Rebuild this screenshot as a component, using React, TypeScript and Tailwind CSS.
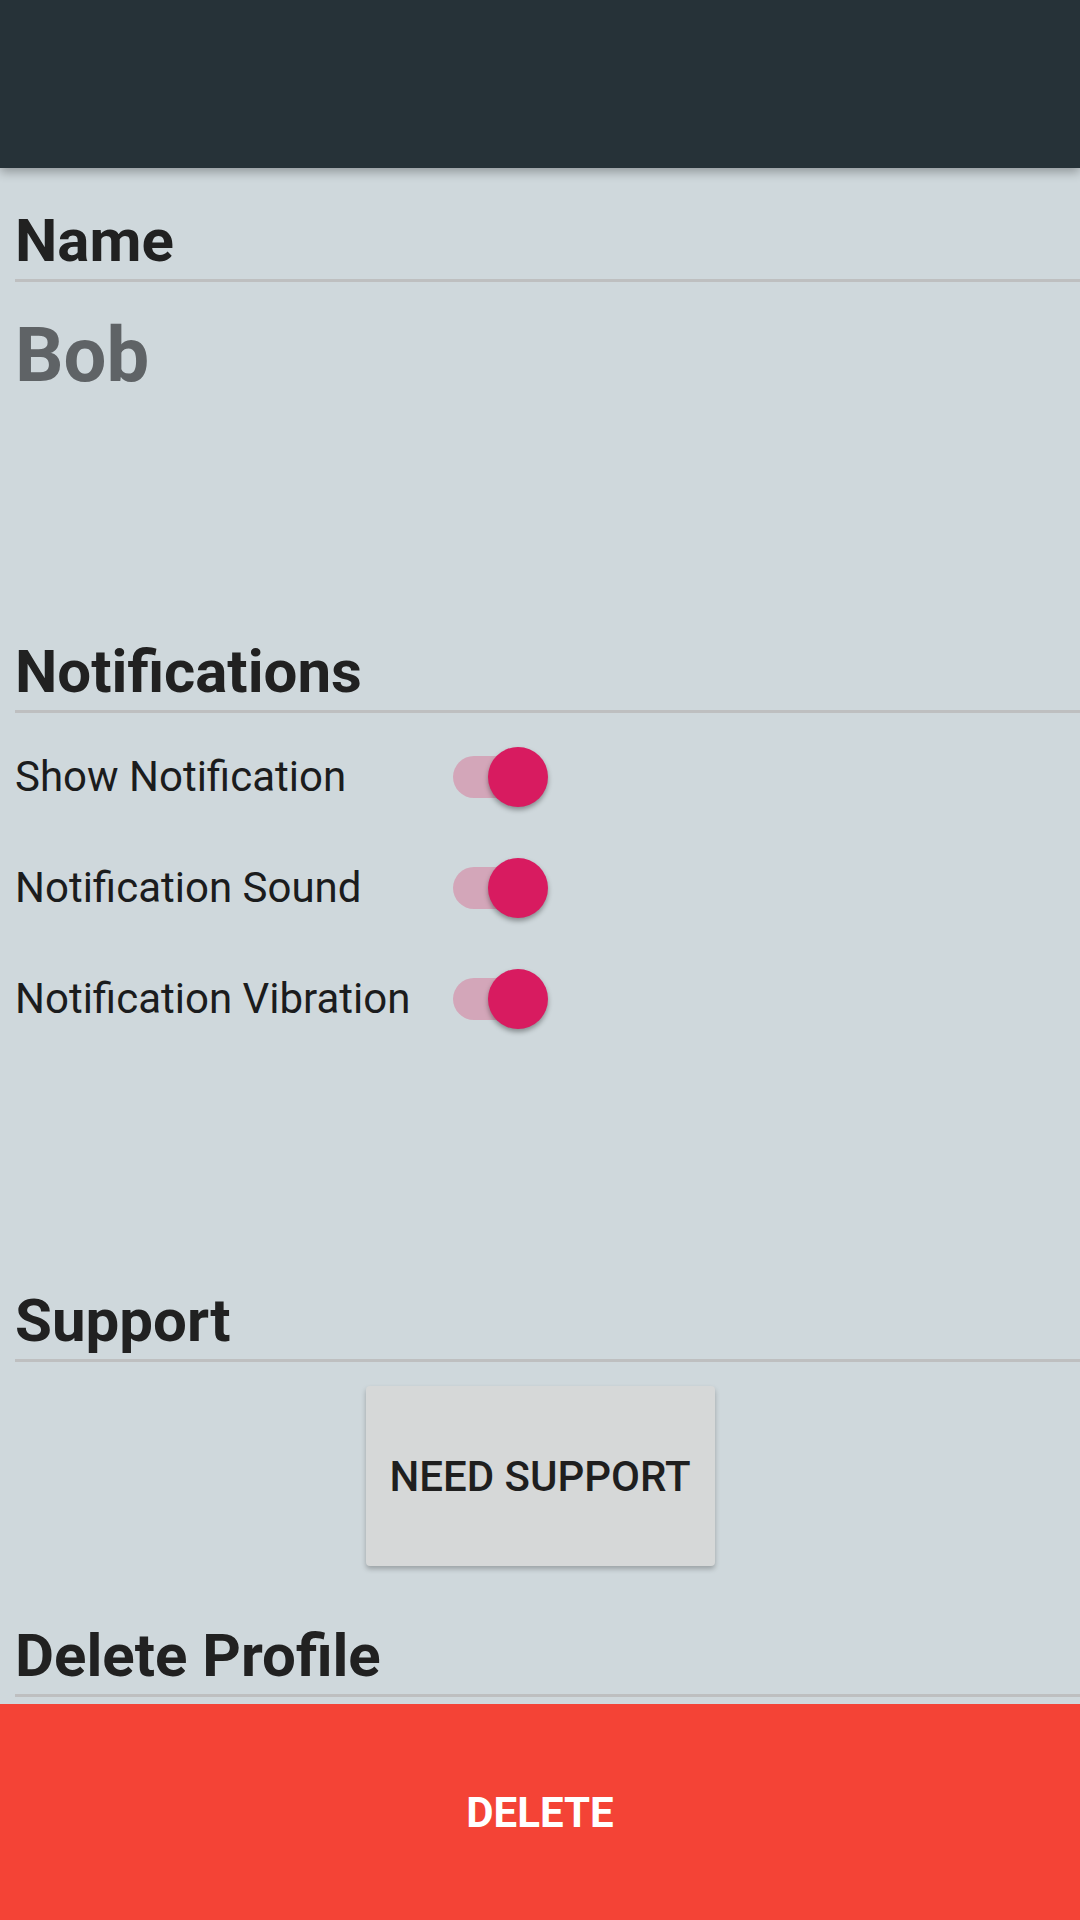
import React, { useState } from 'react';

function SectionTitle({ title, className = '' }: { title: string; className?: string }) {
  return (
    <div className={className}>
      <h2 className="pl-[15px] text-[60px] leading-[60px] font-bold text-[#212121]">{title}</h2>
      <div className="ml-[15px] mt-[8px] h-[3px] bg-[#bebfc0]" />
    </div>
  );
}

function Toggle({ on, onChange }: { on: boolean; onChange: () => void }) {
  return (
    <button onClick={onChange} className="relative w-[95px] h-[60px] shrink-0">
      <span
        className={
          on
            ? 'absolute left-0 top-[9px] w-[85px] h-[42px] rounded-full bg-[#d3a6b9]'
            : 'absolute left-0 top-[9px] w-[85px] h-[42px] rounded-full bg-[#b0b7ba]'
        }
      />
      <span
        className={
          on
            ? 'absolute right-0 top-0 w-[60px] h-[60px] rounded-full bg-[#d81b60] shadow-[0_3px_5px_rgba(0,0,0,0.35)]'
            : 'absolute left-0 top-0 w-[60px] h-[60px] rounded-full bg-[#f1f1f1] shadow-[0_3px_5px_rgba(0,0,0,0.35)]'
        }
      />
    </button>
  );
}

export default function App() {
  const [settings, setSettings] = useState({
    show: true,
    sound: true,
    vibration: true,
  });

  const rows: { key: 'show' | 'sound' | 'vibration'; label: string }[] = [
    { key: 'show', label: 'Show Notification' },
    { key: 'sound', label: 'Notification Sound' },
    { key: 'vibration', label: 'Notification Vibration' },
  ];

  return (
    <div className="min-h-screen flex flex-col bg-[#cfd8dc] font-['Roboto','Liberation_Sans',sans-serif]">
      {/* Toolbar */}
      <div className="relative z-10 h-[168px] shrink-0 bg-[#263238] shadow-[0_4px_10px_rgba(0,0,0,0.3)]" />

      {/* Name */}
      <SectionTitle title="Name" className="mt-[43px]" />
      <p className="mt-[35px] pl-[15px] text-[76px] leading-[76px] font-bold text-[#5f6366]">Bob</p>

      {/* Notifications */}
      <SectionTitle title="Notifications" className="mt-[249px]" />
      <div className="mt-[8px] flex flex-col">
        {rows.map((row) => (
          <div key={row.key} className="h-[111px] flex items-center pl-[15px]">
            <span className="w-[438px] text-[42px] leading-[42px] text-[#1b1c1d]">{row.label}</span>
            <Toggle
              on={settings[row.key]}
              onChange={() => setSettings({ ...settings, [row.key]: !settings[row.key] })}
            />
          </div>
        ))}
      </div>

      {/* Support */}
      <SectionTitle title="Support" className="mt-[237px]" />
      <div className="mt-[24px] flex justify-center">
        <button className="w-[349px] h-[180px] rounded-[4px] bg-[#d6d8d8] text-[42px] font-medium text-[#1f1f1f] shadow-[0_3px_5px_rgba(0,0,0,0.25)]">
          NEED SUPPORT
        </button>
      </div>

      {/* Delete */}
      <SectionTitle title="Delete Profile" className="mt-[60px]" />
      <button className="mt-[7px] flex-1 flex items-center justify-center bg-[#f44336] text-[42px] font-bold text-white">
        DELETE
      </button>
    </div>
  );
}
